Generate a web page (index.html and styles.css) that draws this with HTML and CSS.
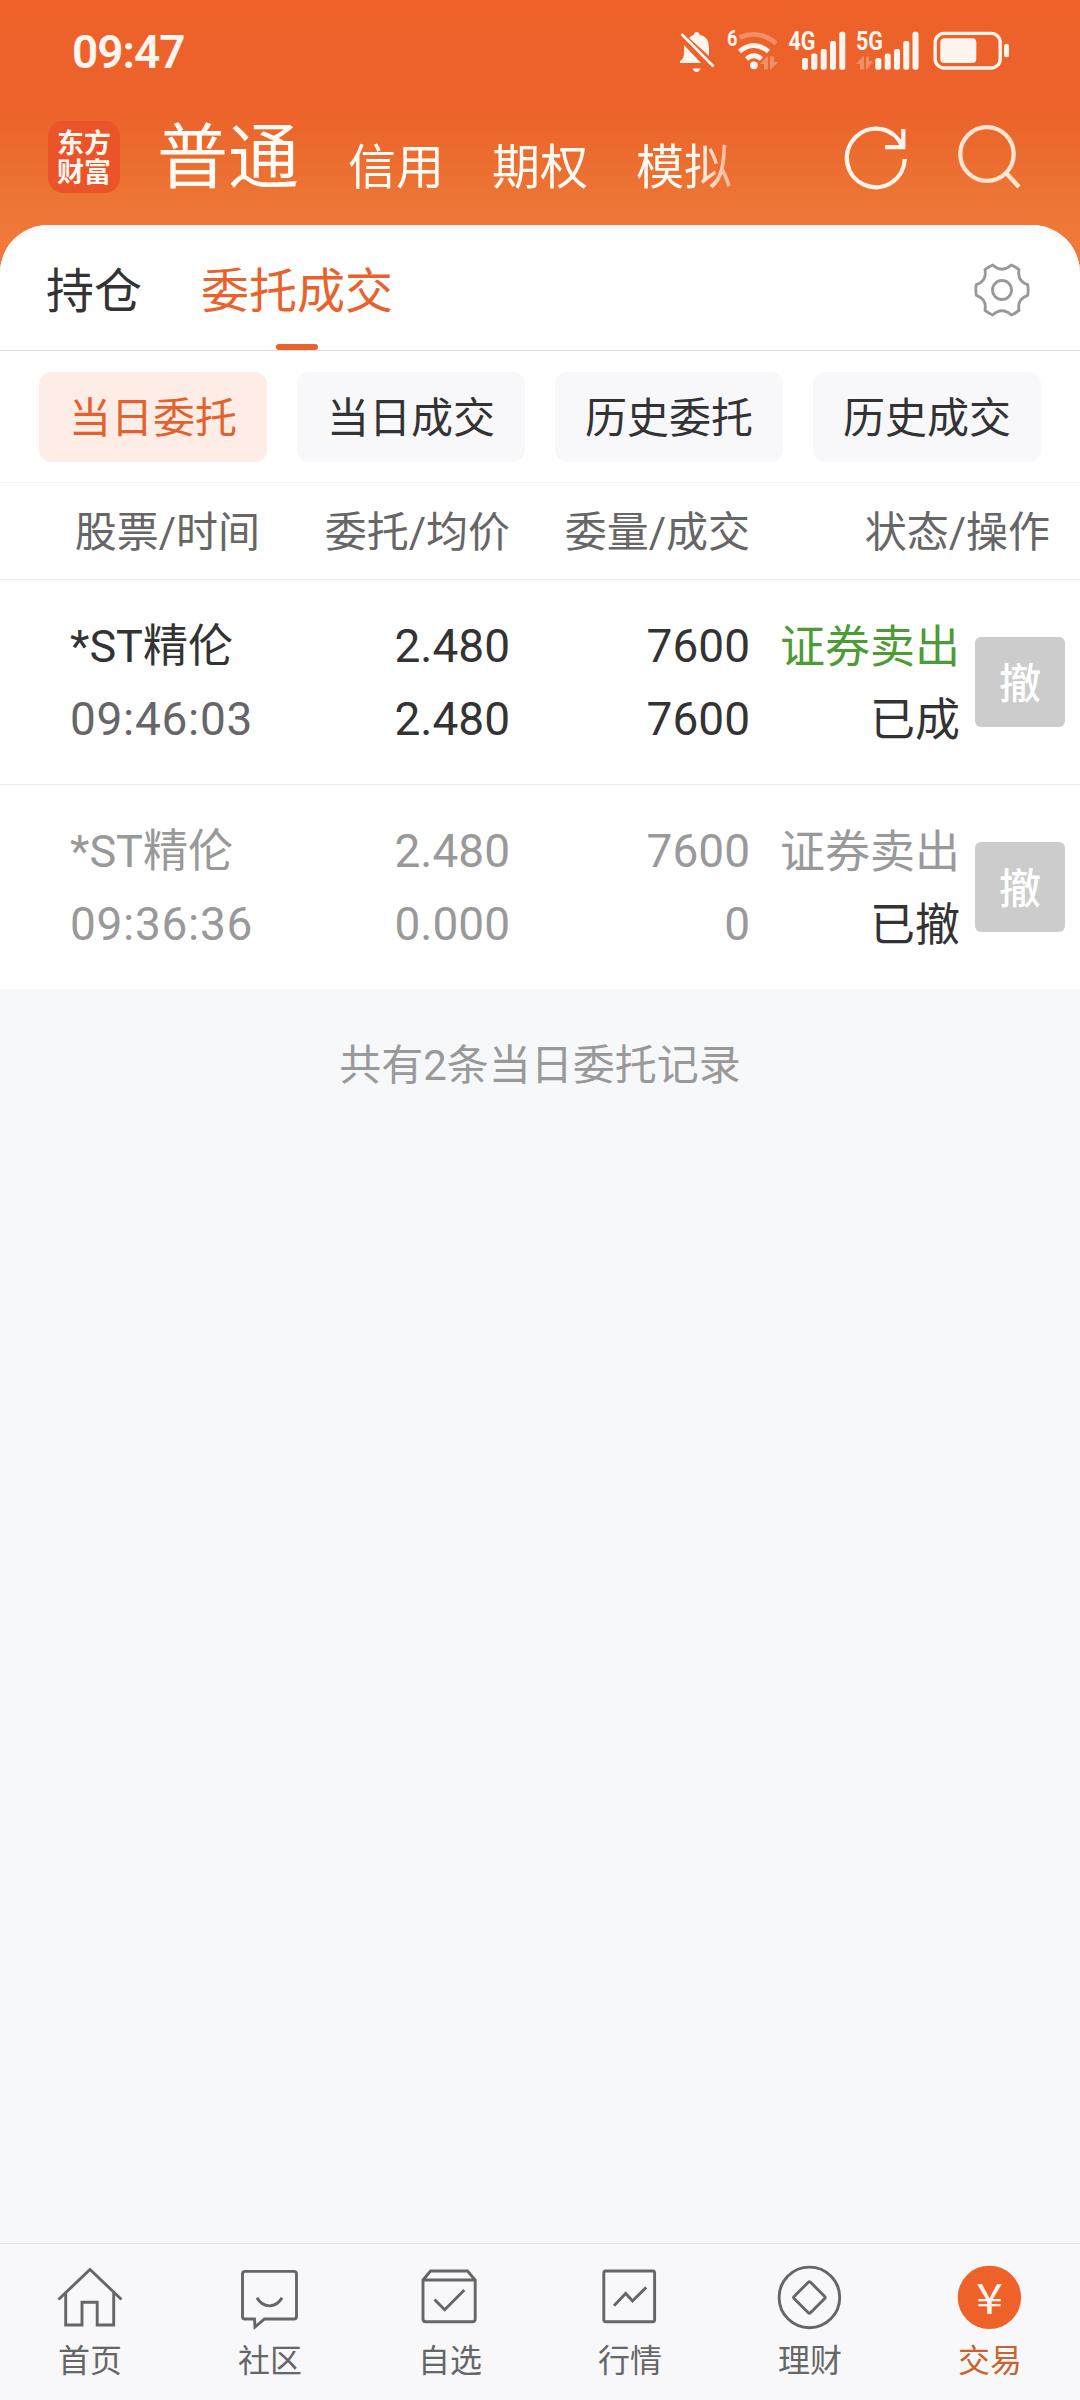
FILE: index.html
```html
<!DOCTYPE html>
<html lang="zh-CN">
<head>
<meta charset="utf-8">
<title>委托成交</title>
<link rel="stylesheet" href="styles.css">
</head>
<body>
<div class="app">
  <header class="top">
    <div class="status">
      <span class="clock">09:47</span>
      <svg class="status-icons" width="332" height="64" viewBox="680 20 332 64">
        <g fill="#fff4ee">
          <path d="M684 45L701 63H680V61Q684 59 684 53ZM689 38Q692 35 694 34.500Q694 32 697 32Q699 32 699.500 34.500Q709 37 709 47V56Z"/>
          <path d="M681.500 34L713.500 66.500" stroke="#fff4ee" stroke-width="2.600"/>
          <path d="M692.500 68.500H700.500Q699 72 696.500 72Q694 72 692.500 68.500Z"/>
          <circle cx="754" cy="65.300" r="3.900"/>
        </g>
        <g fill="none" stroke="#fff4ee" stroke-width="4.800">
          <path d="M739.500 51.500Q754 39.500 768.500 51.500"/>
          <path d="M746.500 59Q754 52.500 761.500 59"/>
          <path d="M739.500 37.500Q759 29 776 43.500" opacity=".3"/>
        </g>
        <g fill="#fff4ee" opacity=".3">
          <path d="M760 64L767 56.500H768V69.500H764V64ZM770 56.500H774V62H778L771 69.500H770Z"/>
          <path d="M856 64L863 56.500H864V69.500H860V64ZM866 56.500H869V61H873L867 69.500H866Z"/>
        </g>
        <g fill="#fff4ee" class="net">
          <text x="727" y="46" font-size="22" textLength="10.500" lengthAdjust="spacingAndGlyphs">6</text>
          <text x="788.500" y="50.300" font-size="25.500" textLength="27" lengthAdjust="spacingAndGlyphs">4G</text>
          <text x="856" y="50.300" font-size="25.500" textLength="27" lengthAdjust="spacingAndGlyphs">5G</text>
        </g>
        <g fill="#fff4ee">
          <rect x="802" y="58" width="6" height="11.700" rx="2"/>
          <rect x="811.300" y="53.500" width="6" height="16.200" rx="2"/>
          <rect x="820.700" y="49" width="6" height="20.700" rx="2"/>
          <rect x="830" y="41" width="6" height="28.700" rx="2"/>
          <rect x="839.300" y="31.700" width="6" height="38" rx="2"/>
          <rect x="875.300" y="58" width="6" height="11.700" rx="2"/>
          <rect x="884.700" y="53.500" width="6" height="16.200" rx="2"/>
          <rect x="894" y="49" width="6" height="20.700" rx="2"/>
          <rect x="903.300" y="41" width="6" height="28.700" rx="2"/>
          <rect x="912.500" y="31.700" width="6" height="38" rx="2"/>
          <rect x="940.300" y="38.300" width="36" height="24.700" rx="4"/>
          <rect x="1004" y="43.700" width="5" height="13.600" rx="2.500"/>
        </g>
        <rect x="935.200" y="33.400" width="65" height="34.600" rx="9" fill="none" stroke="#fff4ee" stroke-width="3.400"/>
      </svg>
    </div>
    <div class="titlebar">
      <div class="logo"><span>东方</span><span>财富</span></div>
      <nav class="accounts">
        <a class="account current">普通</a>
        <a class="account">信用</a>
        <a class="account">期权</a>
        <a class="account">模拟</a>
      </nav>
      <svg class="refresh" width="66" height="68" viewBox="843 124 66 68" fill="none" stroke="#fff4ea" stroke-width="4.300">
        <path d="M904.800 159A29 29.300 0 1 1 902.500 146.500"/>
        <path d="M903.300 129V147.200H885"/>
      </svg>
      <svg class="search" width="66" height="68" viewBox="956 124 66 68" fill="none" stroke="#ffe4d2" stroke-width="4.300">
        <ellipse cx="987" cy="154" rx="26.700" ry="26.900"/>
        <path d="M1005.500 172.500L1019 187" stroke-width="4.500"/>
      </svg>
    </div>
  </header>

  <main class="sheet">
    <div class="tabs">
      <a class="tab">持仓</a>
      <a class="tab active">委托成交</a>
      <svg class="gear" width="60" height="60" viewBox="36 30 180 180" fill="none" stroke="#999" stroke-width="8.500" stroke-linejoin="round">
        <path d="M98 45Q126 70 154 45Q166 50 177 59Q171 93 203 104Q206 120 203 136Q171 147 177 181Q166 190 154 195Q126 170 98 195Q86 190 75 181Q81 147 49 136Q46 120 49 104Q81 93 75 59Q86 50 98 45Z"/>
        <circle cx="126" cy="120" r="28.500"/>
      </svg>
    </div>
    <div class="chips">
      <a class="chip on">当日委托</a>
      <a class="chip">当日成交</a>
      <a class="chip">历史委托</a>
      <a class="chip">历史成交</a>
    </div>
    <div class="grid head">
      <span>股票/时间</span><span>委托/均价</span><span>委量/成交</span><span>状态/操作</span>
    </div>
    <div class="grid order">
      <div class="cell name"><span>*ST精伦</span><span class="time">09:46:03</span></div>
      <div class="cell"><span>2.480</span><span>2.480</span></div>
      <div class="cell"><span>7600</span><span>7600</span></div>
      <div class="cell"><span class="sell">证券卖出</span><span>已成</span></div>
      <button class="cancel">撤</button>
    </div>
    <div class="grid order revoked">
      <div class="cell name"><span>*ST精伦</span><span class="time">09:36:36</span></div>
      <div class="cell"><span>2.480</span><span>0.000</span></div>
      <div class="cell"><span>7600</span><span>0</span></div>
      <div class="cell"><span>证券卖出</span><span class="state">已撤</span></div>
      <button class="cancel">撤</button>
    </div>
  </main>

  <p class="summary">共有2条当日委托记录</p>

  <footer class="dock">
    <a class="item">
      <svg viewBox="0 0 80 72"><path d="M8.500 39.500L40 9.500L71.500 39.500M15.700 33V65H32V42.300H47.200V65H63.700V33"/></svg>
      <span>首页</span>
    </a>
    <a class="item">
      <svg viewBox="0 0 80 72"><path d="M15 11.400H64Q66.500 11.400 66.500 14V56.500Q66.500 59 64 59H34.500L25 67L24.500 59H15Q12.500 59 12.500 56.500V14Q12.500 11.400 15 11.400ZM27 37.800C33 48.500 46 48.500 52 37.800"/></svg>
      <span>社区</span>
    </a>
    <a class="item">
      <svg viewBox="0 0 80 72"><path d="M13 20L20.500 11H57.500L65.200 20V59Q65.200 61.700 62.500 61.700H15.700Q13 61.700 13 59ZM13 20H65.200M24.500 39.500L34.700 49.700L54.300 30"/></svg>
      <span>自选</span>
    </a>
    <a class="item">
      <svg viewBox="0 0 80 72"><rect x="13.800" y="11" width="50.800" height="50.700" rx="2"/><path d="M24 45.700L35.700 33.500L42.500 41L56.200 27.400"/></svg>
      <span>行情</span>
    </a>
    <a class="item">
      <svg viewBox="0 0 80 72"><circle cx="39.400" cy="37.400" r="30.300"/><path d="M38.300 22.200Q39.400 21.200 40.500 22.200L54.700 36.400Q55.700 37.500 54.700 38.600L40.500 52.800Q39.400 53.800 38.300 52.800L24.100 38.600Q23.100 37.500 24.100 36.400Z"/></svg>
      <span>理财</span>
    </a>
    <a class="item selected">
      <svg viewBox="0 0 80 72"><circle class="coin" cx="39.400" cy="37.400" r="31.700"/><text class="yen" x="39.400" y="53.500" text-anchor="middle" textLength="27" lengthAdjust="spacingAndGlyphs">¥</text></svg>
      <span>交易</span>
    </a>
  </footer>
</div>
</body>
</html>
```
FILE: styles.css
```css
* { box-sizing: border-box; }

body {
  margin: 0;
  background: #f7f8fa;
  color: #333;
  font-family: Roboto, "Noto Sans CJK SC", sans-serif;
}

.app {
  display: flex;
  flex-direction: column;
  width: 1080px;
  height: 2400px;
}

.top {
  height: 285px;
  padding: 28px 0 0;
  background: linear-gradient(#ee622a 0, #ec622a 108px, #ec7434 195px, #f07838 240px);
}

.status {
  display: flex;
  justify-content: space-between;
  height: 48px;
  padding: 0 68px 0 72px;
}

.status-icons { margin: -8px 0; flex: none; }

.clock {
  color: #fff4ee;
  font-size: 46px;
  font-weight: 600;
  line-height: 48px;
  letter-spacing: -1px;
}

.net { font-family: Roboto, sans-serif; font-weight: 700; }

.titlebar {
  display: flex;
  align-items: flex-start;
  padding: 45px 58px 0 48px;
}

.logo {
  display: flex;
  flex-direction: column;
  width: 72px;
  height: 72px;
  padding: 6px 0 0 9px;
  border-radius: 15px;
  background: #eb5329;
  color: #fff6ee;
  font-family: "Noto Sans CJK SC", sans-serif;
  font-size: 27px;
  font-weight: 700;
  line-height: 29px;
}

.accounts {
  display: flex;
  gap: 48px;
  width: 612px;
  height: 100px;
  margin-top: -18px;
  padding-left: 37px;
  white-space: nowrap;
  -webkit-mask-image: linear-gradient(90deg, #000 575px, transparent 645px);
  mask-image: linear-gradient(90deg, #000 575px, transparent 645px);
}

.account { color: #fffaf3; font-size: 48px; line-height: 80px; padding-top: 25px; }
.account.current { font-size: 71px; line-height: 90px; padding-top: 10px; margin-right: 1px; }

.refresh { margin: 3px 0 0 111px; flex: none; }
.search { margin: 3px 0 0 47px; flex: none; }

.sheet {
  margin-top: -60px;
  border-radius: 48px 48px 0 0;
  background: #fff;
  box-shadow: inset 0 5px 0 #fcf9f8;
}

.tabs {
  display: flex;
  height: 126px;
  padding: 0 48px 0 46px;
  border-bottom: 1px solid #ddd;
  font-size: 48px;
  line-height: 133px;
}

.tab { position: relative; margin-right: 59px; }
.active { color: #e8622e; }

.active::after {
  content: "";
  position: absolute;
  left: 75px;
  bottom: 0;
  width: 42px;
  height: 6px;
  border-radius: 3px;
  background: #e8622e;
}

.gear { margin: 35px 0 0 auto; }

.chips {
  display: flex;
  gap: 30px;
  height: 132px;
  padding: 21px 39px;
  border-bottom: 1px solid #f5f5f5;
}

.chip {
  flex: 1;
  height: 90px;
  border-radius: 12px;
  background: #f8f8fa;
  font-size: 42px;
  line-height: 93px;
  text-align: center;
}

.chip.on { background: #fdede6; color: #e2622f; }

.grid {
  display: grid;
  grid-template-columns: 270px 240px 240px 210px 105px;
  padding-right: 15px;
  border-bottom: 1px solid #ebebeb;
}

.head {
  height: 97px;
  color: #666;
  font-size: 42px;
  line-height: 99px;
  text-align: right;
  grid-template-columns: 260px 250px 240px 300px;
}

.order { height: 205px; align-items: center; }
.order:last-child { height: 204px; border-bottom: 0; }

.cell {
  display: flex;
  flex-direction: column;
  padding-top: 2px;
  font-size: 46px;
  line-height: 73px;
  text-align: right;
}

.cell.name { padding-left: 70px; font-size: 45px; text-align: left; white-space: nowrap; }
.time { color: #666; font-size: 46px; letter-spacing: .7px; }
.sell { color: #4c9b35; }
.cell:nth-child(4) { padding-top: 3px; font-size: 45px; white-space: nowrap; }
.revoked, .revoked .time { color: #999; }
.revoked .state { color: #333; }

.cancel {
  justify-self: end;
  width: 90px;
  height: 90px;
  padding: 0 0 2px;
  border: 0;
  border-radius: 6px;
  background: #ccc;
  color: #fff;
  font: 500 42px/88px "Noto Sans CJK SC", sans-serif;
}

.summary {
  margin: 42px 0 0;
  color: #999;
  font-size: 42px;
  line-height: 70px;
  text-align: center;
}

.dock {
  display: grid;
  grid-template-columns: repeat(6, 1fr);
  height: 157px;
  margin-top: auto;
  padding-top: 16px;
  border-top: 1px solid #e0e1e3;
  background: #f8f8fa;
}

.item {
  display: flex;
  flex-direction: column;
  align-items: center;
  color: #666;
  font-size: 32px;
  line-height: 58px;
}

.item svg {
  width: 80px;
  height: 72px;
  fill: none;
  stroke: #666;
  stroke-width: 2.900px;
}

.item .coin { fill: #ee622a; stroke: none; }

.item .yen {
  fill: #fff4ee;
  stroke: none;
  font-family: "Noto Sans CJK SC", sans-serif;
  font-size: 42px;
}

.selected { color: #c9622f; }
```
